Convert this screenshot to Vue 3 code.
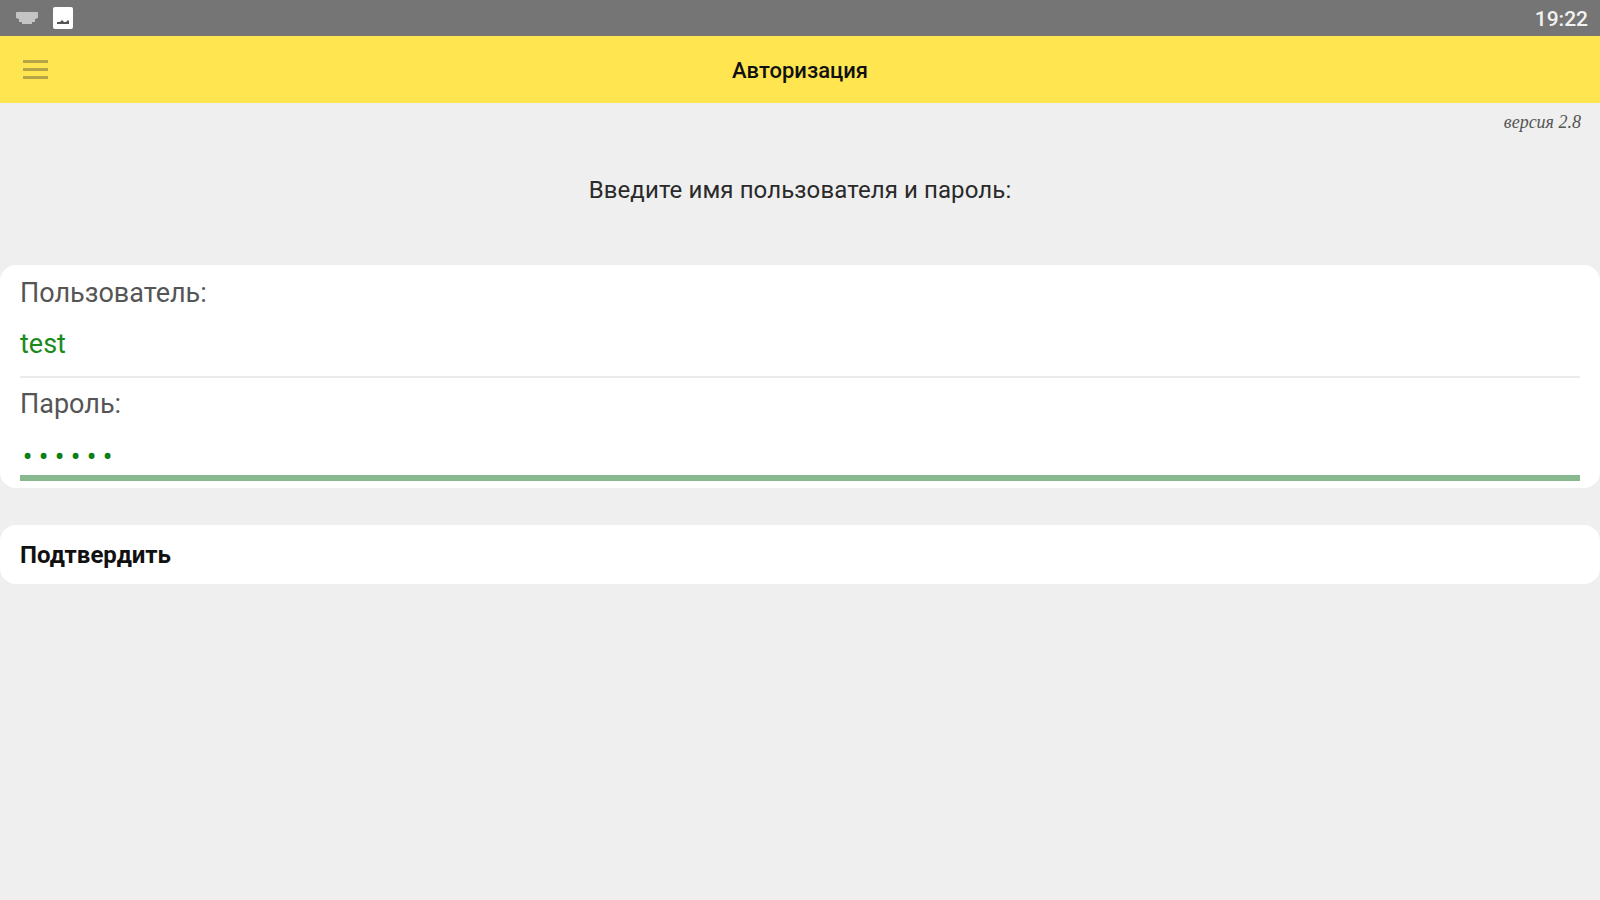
<script setup>
import { ref } from 'vue';

const userName = ref('test');
const password = ref('••••••');
</script>

<template>
  <div class="screen">
    <div class="status-bar">
      <div class="status-icons">
        <svg class="icon-tray" width="24" height="16" viewBox="0 0 24 16">
          <path d="M2 2h20a1 1 0 0 1 1 1v5l-3 1v3h-3v2H7v-2H4V9L1 8V3a1 1 0 0 1 1-1z" fill="#c4c4c4" />
        </svg>
        <svg class="icon-picture" width="22" height="24" viewBox="0 0 22 24">
          <rect x="1" y="1" width="20" height="22" rx="2" fill="#fff" />
          <path d="M5 18v-2h3l2-2 2 2h2l2-2 1 1v3z" fill="#555" />
        </svg>
      </div>
      <span class="clock">19:22</span>
    </div>

    <header class="top-bar">
      <div class="menu-icon">
        <span></span>
        <span></span>
        <span></span>
      </div>
      <h1 class="title">Авторизация</h1>
    </header>

    <div class="version">версия 2.8</div>
    <p class="prompt">Введите имя пользователя и пароль:</p>

    <section class="card fields">
      <label class="field-label">Пользователь:</label>
      <div class="field-value">{{ userName }}</div>
      <div class="divider"></div>
      <label class="field-label second">Пароль:</label>
      <div class="field-value dots">{{ password }}</div>
      <div class="focus-line"></div>
    </section>

    <section class="card submit">Подтвердить</section>
  </div>
</template>

<style>
html,
body {
  margin: 0;
  background: #efefef;
}
</style>

<style scoped>
.screen {
  width: 1600px;
  height: 900px;
  overflow: hidden;
  background: #efefef;
  font-family: Roboto, "Liberation Sans", sans-serif;
  color: #1a1a1a;
}

.status-bar {
  height: 36px;
  box-sizing: border-box;
  padding: 0 12px 0 15px;
  display: flex;
  align-items: center;
  justify-content: space-between;
  background: #757575;
}

.status-icons {
  display: flex;
  align-items: center;
  gap: 13px;
}

.clock {
  padding-top: 2px;
  color: #f2f2f2;
  font-size: 21px;
  font-weight: 500;
}

.top-bar {
  height: 67px;
  box-sizing: border-box;
  padding-top: 2px;
  position: relative;
  display: flex;
  align-items: center;
  justify-content: center;
  background: #ffe650;
}

.menu-icon {
  position: absolute;
  left: 23px;
  top: 24px;
  display: flex;
  flex-direction: column;
  gap: 5px;
}

.menu-icon span {
  display: block;
  width: 25px;
  height: 3px;
  background: #b5a448;
}

.title {
  margin: 0;
  font-size: 22px;
  font-weight: 500;
  color: #111;
}

.version {
  height: 19px;
  margin-top: 10px;
  padding-right: 19px;
  text-align: right;
  font-family: "Liberation Serif", serif;
  font-style: italic;
  font-size: 18px;
  line-height: 19px;
  color: #555;
}

.prompt {
  margin: 44px 0 0;
  text-align: center;
  font-size: 24px;
  line-height: 28px;
  letter-spacing: 0.1px;
  color: #2a2a2a;
}

.card {
  background: #fff;
  border-radius: 16px;
}

.fields {
  height: 223px;
  box-sizing: border-box;
  margin-top: 61px;
  padding: 13px 20px 0;
}

.field-label {
  display: block;
  font-size: 27px;
  line-height: 30px;
  color: #555;
}

.field-label.second {
  margin-top: 11px;
}

.field-value {
  margin-top: 21px;
  font-size: 27px;
  line-height: 30px;
  color: #1b8a1b;
}

.field-value.dots {
  padding-left: 3px;
  color: #0f7f0f;
  letter-spacing: 7px;
  font-size: 25px;
  font-weight: 700;
  position: relative;
  top: 2px;
}

.divider {
  height: 2px;
  margin-top: 17px;
  background: #ebebeb;
}

.focus-line {
  height: 6px;
  margin-top: 5px;
  background: #88b88e;
}

.submit {
  height: 59px;
  margin-top: 37px;
  padding: 0 20px;
  display: flex;
  align-items: center;
  font-size: 24px;
  font-weight: 700;
  color: #111;
}
</style>
